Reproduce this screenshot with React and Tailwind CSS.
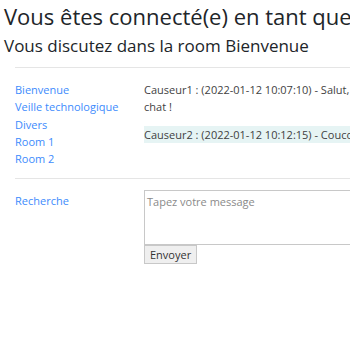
import React from "react";

const rooms = ["Bienvenue", "Veille technologique", "Divers", "Room 1", "Room 2"];

export default function App() {
  return (
    <div
      className="w-[350px] h-[350px] overflow-hidden bg-white text-[#212529]"
      style={{ fontFamily: '"Open Sans", "Noto Sans", sans-serif' }}
    >
      <div className="w-[720px]">
        <h1 className="pl-[4px] pt-[1px] text-[22px] leading-[30px] font-normal whitespace-nowrap">
          Vous êtes connecté(e) en tant que Causeur1
        </h1>
        <h2 className="pl-[4px] mt-[3px] text-[17px] leading-[24px] font-normal whitespace-nowrap">
          Vous discutez dans la room Bienvenue
        </h2>

        <div className="pl-[15px] mt-[9px]">
          <hr className="border-t border-[#e5e5e5]" />
          <div className="flex pt-[13px] pb-[11px]">
            <ul className="w-[129px] shrink-0 text-[11px] leading-[17.3px]">
              {rooms.map((r) => (
                <li key={r}>
                  <a className="text-[#3d8bfd]">{r}</a>
                </li>
              ))}
            </ul>
            <div className="w-[400px] text-[11px] leading-[17px] text-[#3f3f3f]">
              <p>
                Causeur1 : (2022-01-12 10:07:10) - Salut, bienvenue sur le
                <br />
                chat !
              </p>
              <p className="mt-[11px] bg-[#e6f4f4] whitespace-nowrap">
                Causeur2 : (2022-01-12 10:12:15) - Coucou tout le monde
              </p>
            </div>
          </div>
          <hr className="border-t border-[#e5e5e5]" />
          <div className="flex pt-[11px]">
            <div className="w-[129px] shrink-0 text-[11px] leading-[17px] pt-[2px]">
              <a className="text-[#3d8bfd]">Recherche</a>
            </div>
            <div className="flex flex-col items-start">
              <textarea
                placeholder="Tapez votre message"
                className="w-[400px] h-[55px] border border-[#c8c8c8] px-[2px] pt-[3px] pb-[1px] text-[11px] leading-[15px] placeholder:text-[#8a8a8a] resize-none"
              />
              <button className="border border-[#c8c8c8] bg-[#efefef] px-[5px] h-[19px] text-[11px] leading-[17px] text-[#333]">
                Envoyer
              </button>
            </div>
          </div>
        </div>
      </div>
    </div>
  );
}
